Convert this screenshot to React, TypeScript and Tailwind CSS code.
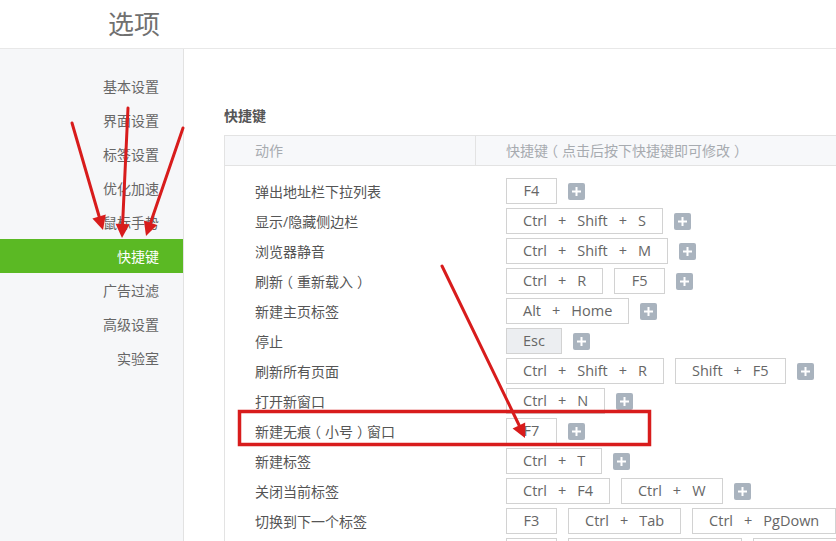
const font = { fontFamily: '"Open Sans", "Noto Sans CJK SC", sans-serif' };

const menu = ["基本设置", "界面设置", "标签设置", "优化加速", "鼠标手势", "快捷键", "广告过滤", "高级设置", "实验室"];

type Row = { label: string; keys: string[][]; plus?: boolean; grey?: boolean };

const rows: Row[] = [
  { label: "弹出地址栏下拉列表", keys: [["F4"]], plus: true },
  { label: "显示/隐藏侧边栏", keys: [["Ctrl", "Shift", "S"]], plus: true },
  { label: "浏览器静音", keys: [["Ctrl", "Shift", "M"]], plus: true },
  { label: "刷新（重新载入）", keys: [["Ctrl", "R"], ["F5"]], plus: true },
  { label: "新建主页标签", keys: [["Alt", "Home"]], plus: true },
  { label: "停止", keys: [["Esc"]], plus: true, grey: true },
  { label: "刷新所有页面", keys: [["Ctrl", "Shift", "R"], ["Shift", "F5"]], plus: true },
  { label: "打开新窗口", keys: [["Ctrl", "N"]], plus: true },
  { label: "新建无痕（小号）窗口", keys: [["F7"]], plus: true },
  { label: "新建标签", keys: [["Ctrl", "T"]], plus: true },
  { label: "关闭当前标签", keys: [["Ctrl", "F4"], ["Ctrl", "W"]], plus: true },
  { label: "切换到下一个标签", keys: [["F3"], ["Ctrl", "Tab"], ["Ctrl", "PgDown"]], plus: true },
  { label: "切换到上一个标签", keys: [["F2"], ["Ctrl", "Shift", "Tab"], ["Ctrl", "PgUp"]], plus: true },
];

// full-width brackets are centred in the reference font; nudge them toward the middle of their box
function Cjk({ text }: { text: string }) {
  return (
    <span className="whitespace-nowrap">
      {text.split(/([（）])/).map((part, i) =>
        part === "（" ? (
          <span key={i} className="ml-[-4px] mr-[4px]">（</span>
        ) : part === "）" ? (
          <span key={i} className="ml-[4px] mr-[-4px]">）</span>
        ) : (
          <span key={i}>{part}</span>
        )
      )}
    </span>
  );
}

function KeyBox({ keys, grey }: { keys: string[]; grey?: boolean }) {
  return (
    <div
      className={[
        "flex h-[26px] min-w-[51px] shrink-0 items-center justify-center gap-[11px] border border-[#d2d2d2] px-[16px] text-[14.5px] text-[#666]",
        grey ? "bg-[#eceef1]" : "bg-white",
      ].join(" ")}
    >
      {keys.map((k, i) => (
        <span key={i} className="flex items-center gap-[11px]">
          {i > 0 && <span>+</span>}
          <span>{k}</span>
        </span>
      ))}
    </div>
  );
}

function PlusButton() {
  return (
    <div className="flex h-[17px] w-[17px] shrink-0 items-center justify-center rounded-[2px] bg-[#a9b3be]">
      <svg width="9" height="9" viewBox="0 0 9 9">
        <rect x="3.5" y="0" width="2" height="9" fill="#fff" />
        <rect x="0" y="3.5" width="9" height="2" fill="#fff" />
      </svg>
    </div>
  );
}

function Annotations() {
  return (
    <svg className="pointer-events-none absolute left-0 top-0" width="836" height="541" viewBox="0 0 836 541">
      <g stroke="#d81c1c" strokeWidth="3" strokeLinecap="round" fill="none">
        <line x1="72" y1="123" x2="99" y2="216" />
        <line x1="128" y1="108" x2="122.6" y2="224" />
        <line x1="183" y1="128" x2="150.5" y2="223" />
        <line x1="442" y1="266" x2="519" y2="425" />
      </g>
      <g fill="#d81c1c">
        <polygon points="103,230 105.8,214.6 92.4,218.6" />
        <polygon points="122,238 115.6,223.7 129.6,224.3" />
        <polygon points="146,236 143.9,220.5 157.1,225.1" />
        <polygon points="525,438 512.6,428.4 525.2,422.4" />
      </g>
      <rect x="239.5" y="411.5" width="410" height="33" fill="none" stroke="#d81c1c" strokeWidth="3.5" />
    </svg>
  );
}

export default function App() {
  return (
    <div className="relative h-[541px] w-[836px] overflow-hidden bg-white" style={font}>
      <header className="flex h-[49px] items-center border-b border-[#e8e8e8] pl-[108px]">
        <span className="text-[26px] leading-none text-[#707070]">选项</span>
      </header>
      <div className="flex h-[492px]">
        <aside className="w-[184px] shrink-0 border-r border-[#e2e2e2] bg-[#f6f7f9] pt-[20px]">
          {menu.map((m) => (
            <div
              key={m}
              className={[
                "flex h-[34px] items-center justify-end pr-[24px] text-[14px]",
                m === "快捷键" ? "bg-[#5bb924] text-white" : "text-[#666]",
              ].join(" ")}
            >
              {m}
            </div>
          ))}
        </aside>
        <main className="flex-1 pl-[40px] pt-[57px]">
          <div className="mb-[9px] text-[14px] font-bold leading-[20px] text-[#555]">快捷键</div>
          <div className="w-[700px] border-l border-t border-[#e3e3e3]">
            <div className="flex h-[30px] items-center border-b border-[#e3e3e3] bg-[#f7f8fa] text-[14px] text-[#a7abb0]">
              <div className="flex h-full w-[251px] shrink-0 items-center border-r border-[#e3e3e3] pl-[30px]">动作</div>
              <div className="flex-1 whitespace-nowrap pl-[30px]">
                <Cjk text="快捷键（点击后按下快捷键即可修改）" />
              </div>
            </div>
            <div className="pt-[10px]">
              {rows.map((r) => (
                <div key={r.label} className="flex h-[30px] items-center">
                  <div className="w-[251px] shrink-0 pl-[30px] text-[14px] text-[#555]">
                    <Cjk text={r.label} />
                  </div>
                  <div className="flex items-center gap-[11px] pl-[30px]">
                    {r.keys.map((k, i) => (
                      <KeyBox key={i} keys={k} grey={r.grey} />
                    ))}
                    {r.plus && <PlusButton />}
                  </div>
                </div>
              ))}
            </div>
          </div>
        </main>
      </div>
      <Annotations />
    </div>
  );
}
